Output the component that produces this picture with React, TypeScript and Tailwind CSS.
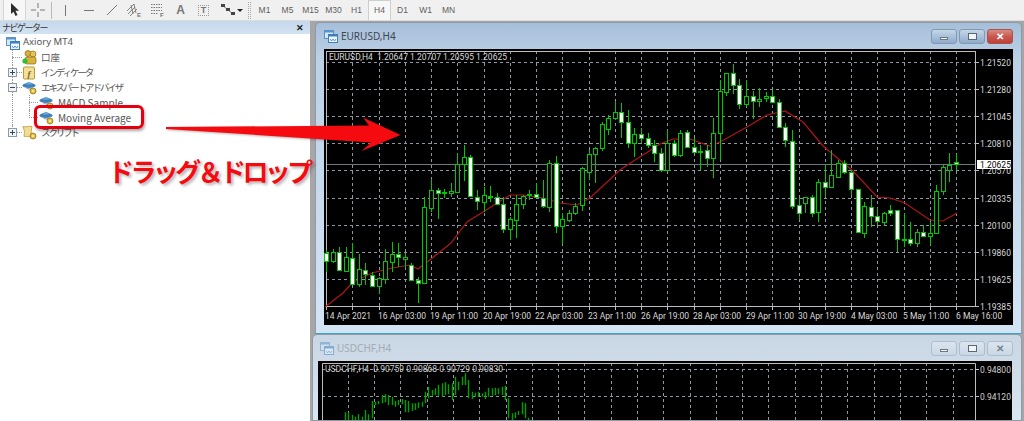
import React from 'react';

// hi, body top, body bottom, lo, solid (white body) - pixel rows of the picture
type Candle = [number, number, number, number, number];

const CANDLES: Candle[] = [
  [250, 253, 261, 272, 1], [249, 252, 261, 263, 0], [247, 252, 270, 271, 1], [247, 257, 271, 271, 0],
  [243, 258, 284, 285, 1], [254, 269, 284, 287, 0], [263, 270, 274, 285, 1], [272, 275, 286, 287, 1],
  [277, 278, 286, 294, 0], [249, 261, 279, 284, 0], [242, 254, 262, 272, 0], [243, 254, 257, 267, 1],
  [253, 257, 259, 268, 0], [263, 265, 280, 281, 1], [277, 280, 283, 303, 1], [197, 207, 283, 284, 0],
  [179, 190, 208, 212, 0], [188, 190, 193, 219, 1], [189, 192, 193, 198, 0], [183, 191, 193, 197, 0],
  [153, 164, 192, 192, 0], [145, 157, 164, 181, 0], [155, 157, 196, 197, 1], [190, 197, 201, 210, 1],
  [187, 195, 202, 212, 0], [186, 196, 197, 202, 0], [193, 197, 204, 205, 1], [197, 204, 229, 233, 1],
  [217, 219, 229, 240, 0], [195, 204, 220, 238, 0], [195, 196, 204, 209, 0], [190, 194, 195, 200, 0],
  [183, 194, 197, 198, 1], [180, 198, 206, 208, 1], [160, 163, 207, 212, 0], [156, 163, 226, 233, 1],
  [213, 219, 226, 244, 0], [210, 213, 220, 222, 0], [203, 206, 213, 215, 0], [167, 168, 205, 211, 0],
  [150, 154, 172, 180, 0], [147, 148, 154, 183, 0], [122, 124, 148, 151, 0], [115, 118, 129, 135, 0],
  [101, 112, 118, 120, 0], [103, 112, 122, 138, 1], [110, 122, 143, 148, 1], [128, 134, 143, 157, 0],
  [128, 134, 138, 143, 1], [133, 138, 145, 148, 1], [140, 145, 153, 162, 1], [148, 153, 170, 172, 1],
  [130, 143, 170, 172, 0], [140, 143, 155, 157, 1], [130, 133, 155, 157, 0], [130, 132, 147, 148, 1],
  [138, 147, 152, 153, 1], [145, 151, 152, 170, 0], [145, 150, 158, 167, 1], [118, 133, 158, 178, 0],
  [80, 91, 133, 160, 0], [73, 73, 92, 96, 0], [64, 73, 85, 94, 1], [79, 85, 104, 109, 1],
  [80, 96, 104, 106, 0], [91, 96, 101, 119, 1], [88, 99, 101, 107, 0], [92, 96, 98, 102, 0],
  [90, 96, 102, 103, 1], [99, 102, 127, 128, 1], [123, 127, 140, 147, 1], [130, 141, 206, 209, 1],
  [198, 205, 213, 220, 1], [197, 197, 203, 213, 0], [195, 197, 213, 217, 1], [179, 182, 212, 222, 0],
  [165, 182, 187, 197, 1], [150, 175, 187, 188, 0], [160, 163, 177, 178, 0], [160, 163, 172, 174, 1],
  [170, 172, 189, 195, 1], [189, 189, 232, 233, 1], [202, 206, 233, 238, 0], [195, 207, 216, 227, 1],
  [208, 216, 221, 225, 1], [212, 213, 222, 225, 0], [205, 210, 213, 216, 1], [210, 210, 239, 252, 1],
  [213, 239, 240, 247, 0], [222, 239, 243, 246, 1], [229, 232, 243, 247, 0], [225, 232, 236, 237, 1],
  [222, 233, 236, 245, 0], [185, 191, 233, 234, 0], [165, 167, 191, 195, 0], [153, 165, 170, 182, 0],
  [154, 162, 164, 170, 1],
];

const MA_LINE =
  '325,307 343,293 352,283 372,273 392,268 410,265 418,269 431,259 451,243 467,222 483,212 510,195 523,195 543,198 560,203 577,205 590,198 620,170 635,160 654,148 660,144 673,139 690,139 710,146 720,142 747,127 767,115 785,111 803,122 823,146 853,171 877,197 890,198 905,203 930,220 943,221 957,213';

const PRICES = [
  ['1.21520', 62], ['1.21280', 89], ['1.21045', 116], ['1.20810', 143], ['1.20570', 170],
  ['1.20335', 198], ['1.20100', 225], ['1.19860', 252], ['1.19625', 279], ['1.19385', 306],
] as const;

const TIMES = [
  ['14 Apr 2021', 325], ['16 Apr 03:00', 378], ['19 Apr 11:00', 430], ['20 Apr 19:00', 483],
  ['22 Apr 03:00', 535], ['23 Apr 11:00', 588], ['26 Apr 19:00', 641], ['28 Apr 03:00', 693],
  ['29 Apr 11:00', 746], ['30 Apr 19:00', 798], ['4 May 03:00', 851], ['5 May 11:00', 903], ['6 May 16:00', 956],
] as const;

// x offset in the zoomed crop, top, bottom of each bar of the second chart
const CHF_BARS = [
  [105, 262, 288], [115, 262, 288], [125, 270, 288], [135, 275, 288], [145, 268, 288], [155, 275, 288], [165, 255, 285],
  [175, 268, 285], [185, 228, 280], [195, 230, 240], [205, 228, 238], [215, 210, 235], [225, 208, 232], [235, 210, 240],
  [245, 215, 240], [255, 228, 245], [265, 225, 240], [275, 222, 238], [285, 225, 262], [295, 228, 262], [305, 235, 258],
  [315, 235, 255], [325, 232, 250], [335, 230, 245], [345, 200, 235], [355, 185, 220], [365, 195, 212], [375, 190, 210],
  [385, 180, 212], [395, 175, 215], [405, 172, 210], [415, 178, 208], [425, 175, 225], [435, 155, 210], [445, 170, 195],
  [455, 155, 180], [465, 145, 180], [475, 165, 220], [485, 200, 222], [495, 203, 215], [505, 200, 215], [515, 205, 215],
  [525, 200, 222], [535, 188, 215], [545, 190, 212], [555, 188, 210], [565, 190, 208], [575, 185, 210], [585, 182, 225],
  [595, 220, 280], [605, 265, 285], [615, 262, 280], [625, 258, 270], [635, 232, 268], [645, 235, 280], [655, 278, 288],
];

const CHART_FONT = 'Roboto, sans-serif';

function range(from: number, to: number, step: number) {
  const out: number[] = [];
  for (let v = from; v <= to; v += step) out.push(Math.round(v) + 0.5);
  return out;
}

const GridLines: React.FC<{ xs: number[]; ys: number[]; left: number; top: number; bottom: number }> = ({ xs, ys, left, top, bottom }) => (
  <g stroke="#8e98a2" strokeWidth="1" strokeDasharray="3 3">
    {xs.map((x) => <line key={x} x1={x} x2={x} y1={top} y2={bottom} />)}
    {ys.map((y) => <line key={y} x1={left} x2={975} y1={y} y2={y} />)}
  </g>
);

const EurChart: React.FC = () => {
  const xs = range(326, 975, 26.25);
  const ys = PRICES.map((p) => p[1] + 0.5);
  return (
    <svg viewBox="324 49 689 276" width={689} height={276} className="block shrink-0 bg-black">
      <GridLines xs={xs} ys={ys} left={326} top={51} bottom={307} />
      <line x1={326} x2={975} y1={164.5} y2={164.5} stroke="#6d7883" />
      <rect x={326.5} y={51.5} width={649} height={255} fill="none" stroke="#bcbcbc" />
      {xs.map((x) => <line key={x} x1={x} x2={x} y1={307} y2={310} stroke="#bcbcbc" />)}
      {ys.map((y) => <line key={y} x1={975} x2={979} y1={y} y2={y} stroke="#bcbcbc" />)}
      <polyline points={MA_LINE} fill="none" stroke="#b0141a" strokeWidth="1.2" />
      {CANDLES.map(([hi, top, bot, lo, solid], i) => {
        const x = Math.round(326 + 6.5625 * i) + 0.5;
        return (
          <g key={i} stroke="#00c800">
            <line x1={x} x2={x} y1={hi} y2={lo} />
            <rect x={x - 2} y={top + 0.5} width={4} height={Math.max(bot - top, 1)} fill={solid ? '#fff' : '#000'} />
          </g>
        );
      })}
      <g fontFamily={CHART_FONT} fontSize="8.5" fill="#d8d8d8">
        <text x={329} y={60}>EURUSD,H4&nbsp;&nbsp;1.20647 1.20707 1.20595 1.20625</text>
        {PRICES.map(([label, y]) => <text key={label} x={980} y={y + 3.5}>{label}</text>)}
        {TIMES.map(([label, x]) => <text key={label} x={x} y={319}>{label}</text>)}
      </g>
      <rect x={977} y={160} width={34} height={9} fill="#fff" />
      <text x={980} y={167.5} fontFamily={CHART_FONT} fontSize="8.5" fill="#000">1.20625</text>
    </svg>
  );
};

const ChfChart: React.FC = () => {
  const xs = range(347.7, 975, 26.3);
  return (
    <svg viewBox="318 361 694 60" width={694} height={60} className="block shrink-0 bg-black">
      <GridLines xs={xs} ys={[369.5, 396.5]} left={322} top={363} bottom={421} />
      <path d="M322.5 421V363.5H975.5V421" fill="none" stroke="#bdbdbd" />
      <line x1={975} x2={979} y1={369.5} y2={369.5} stroke="#c4c4c4" />
      <line x1={975} x2={979} y1={396.5} y2={396.5} stroke="#c4c4c4" />
      {CHF_BARS.map(([z, a, b]) => {
        const x = Math.round(310 + z / 3) + 0.5;
        return <line key={z} x1={x} x2={x} y1={325 + a / 3} y2={325 + b / 3} stroke="#00a000" strokeWidth="1.4" />;
      })}
      <g fontFamily={CHART_FONT} fontSize="8.5" fill="#cfcfcf">
        <text x={325} y={372}>USDCHF,H4&nbsp;&nbsp;0.90759 0.90868 0.90729 0.90830</text>
        <text x={980} y={372.5}>0.94800</text>
        <text x={980} y={399.5}>0.94120</text>
      </g>
    </svg>
  );
};

const WindowIcon: React.FC<{ faded?: boolean; size?: number }> = ({ faded, size = 14 }) => (
  <svg width={size} height={size} viewBox="0 0 14 14" className={faded ? 'opacity-50' : ''}>
    <rect x="0.5" y="1.5" width="9" height="8" fill="#d7e8f7" stroke="#5b93c8" />
    <rect x="0.5" y="1.5" width="9" height="2" fill="#5b93c8" />
    <rect x="4.5" y="5.5" width="9" height="8" fill="#eef6fd" stroke="#3f7fc0" />
    <rect x="4.5" y="5.5" width="9" height="2" fill="#3f7fc0" />
    <path d="M6 10l1.5 2 1.5-2 1.5 2 1.5-2" fill="none" stroke="#3f7fc0" strokeWidth="0.8" />
  </svg>
);

const Controls: React.FC<{ active?: boolean }> = ({ active }) => {
  const btn = active
    ? 'bg-gradient-to-b from-[#c6d6e7] via-[#a9c1da] to-[#8fabcb] border-[#8299b2]'
    : 'bg-gradient-to-b from-[#dbe5ef] to-[#c9d7e5] border-[#aebdcc]';
  return (
    <div className="flex items-center gap-[2px]">
      <div className={`flex h-[15px] w-[26px] items-center justify-center rounded-[3px] border ${btn}`}>
        <div className="mt-[4px] h-[3px] w-[8px] border border-[#6b7784] bg-[#f2f5f8]" />
      </div>
      <div className={`flex h-[15px] w-[26px] items-center justify-center rounded-[3px] border ${btn}`}>
        <div className="h-[7px] w-[9px] border border-[#5b6773] bg-[#f2f5f8]" />
      </div>
      <div
        className={`flex h-[15px] w-[26px] items-center justify-center rounded-[3px] border text-[10px] leading-none font-bold ${
          active
            ? 'border-[#a5534b] bg-gradient-to-b from-[#d88a84] via-[#c9584f] to-[#c04038] text-white'
            : `${btn} text-[#76828e]`
        }`}
      >
        ✕
      </div>
    </div>
  );
};

const ToolBtn: React.FC<{ children: React.ReactNode; className?: string }> = ({ children, className }) => (
  <div className={`flex h-[20px] w-[23px] shrink-0 items-center justify-center ${className ?? ''}`}>{children}</div>
);

const Sep: React.FC = () => <div className="mx-[2px] h-[17px] w-px shrink-0 bg-[#b9b9b9]" />;

const G = '#777';

const Toolbar: React.FC = () => (
  <div className="flex h-[21px] shrink-0 items-center border-b border-[#dcdcdc] bg-[#f0f0f0] pl-[3px] font-['Liberation_Sans',sans-serif]">
    <ToolBtn className="border-x border-[#d4d4d4] bg-[#f7f7f7]">
      <svg width="10" height="14" viewBox="0 0 10 14"><path d="M1 0v11l2.5-2.3L5.5 13l2-1-2-4.2H9z" fill="#2c2c2c" /></svg>
    </ToolBtn>
    <ToolBtn>
      <svg width="14" height="14" viewBox="0 0 14 14"><path d="M7 0v5M7 9v5M0 7h5M9 7h5" stroke={G} /></svg>
    </ToolBtn>
    <Sep />
    <ToolBtn><div className="h-[11px] w-px bg-[#777]" /></ToolBtn>
    <ToolBtn><div className="h-px w-[10px] bg-[#777]" /></ToolBtn>
    <ToolBtn>
      <svg width="12" height="12" viewBox="0 0 12 12"><path d="M1 11L11 1" stroke={G} /></svg>
    </ToolBtn>
    <ToolBtn>
      <svg width="15" height="14" viewBox="0 0 15 14">
        <path d="M0 8L7 1M1 11l7-7M3 13l7-7M4 2l2 9M7 1l2 9" stroke={G} fill="none" strokeWidth="0.9" />
        <text x="10" y="13.5" fontSize="6" fontWeight="700" fill={G} fontFamily="Liberation Sans, sans-serif">E</text>
      </svg>
    </ToolBtn>
    <ToolBtn>
      <svg width="15" height="14" viewBox="0 0 15 14">
        <path d="M1 1.5h11M1 4.5h11M1 7.5h11M1 10.5h7" stroke={G} strokeDasharray="1.5 1" fill="none" />
        <text x="10" y="13.5" fontSize="6" fontWeight="700" fill={G} fontFamily="Liberation Sans, sans-serif">F</text>
      </svg>
    </ToolBtn>
    <ToolBtn><span className="text-[12px] font-bold text-[#777]">A</span></ToolBtn>
    <ToolBtn>
      <div className="flex h-[11px] w-[11px] items-center justify-center border border-dotted border-[#999] text-[9px] leading-none font-bold text-[#777]">T</div>
    </ToolBtn>
    <div className="ml-[2px] flex h-[20px] w-[29px] shrink-0 items-center justify-center gap-[2px]">
      <svg width="14" height="12" viewBox="0 0 14 12">
        <path d="M1 1l11 9" stroke={G} />
        <path d="M0 0h4v3H0zM5 4h4v3H5zM10 8h4v3h-4z" fill="#444" />
      </svg>
      <svg width="6" height="3" viewBox="0 0 6 3"><path d="M0 0h6L3 3z" fill="#222" /></svg>
    </div>
    <div className="mr-[2px] ml-[2px] h-[17px] w-[3px] shrink-0 border-x border-dotted border-[#a8a8a8]" />
    {['M1', 'M5', 'M15', 'M30', 'H1', 'H4', 'D1', 'W1', 'MN'].map((tf) => (
      <div
        key={tf}
        className={`flex h-[20px] w-[23px] shrink-0 items-center justify-center text-[8.5px] text-[#5e5e5e] ${
          tf === 'H4' ? 'border-x border-t border-[#cfcfcf] bg-[#f7f7f7]' : ''
        }`}
      >
        {tf}
      </div>
    ))}
  </div>
);

const Gold = '#d9b13b';

const AccountIcon = () => (
  <svg width="16" height="15" viewBox="0 0 16 15">
    <circle cx="6" cy="3.5" r="3" fill={Gold} stroke="#8a6a14" strokeWidth="0.7" />
    <circle cx="11" cy="4" r="3" fill="#e5c356" stroke="#8a6a14" strokeWidth="0.7" />
    <rect x="3" y="7" width="11" height="7" rx="2" fill={Gold} stroke="#8a6a14" strokeWidth="0.7" />
    <circle cx="3" cy="11" r="2.6" fill="#2bc03a" />
  </svg>
);

const IndicatorIcon = () => (
  <svg width="14" height="14" viewBox="0 0 14 14">
    <rect x="1.5" y="1" width="11" height="12" rx="1" fill="#f3df97" stroke="#b89a3c" />
    <text x="7" y="10.5" textAnchor="middle" fontSize="9" fontStyle="italic" fontWeight="700" fill="#7c6420" fontFamily="Liberation Serif, serif">f</text>
  </svg>
);

const ExpertIcon = () => (
  <svg width="15" height="15" viewBox="0 0 15 15">
    <ellipse cx="7" cy="5.5" rx="6.5" ry="2.4" fill="#3f82bd" />
    <path d="M3.5 5C4 1.5 10 1.5 10.5 5z" fill="#6aa7d8" stroke="#2f6ea5" strokeWidth="0.5" />
    <path d="M4 7.5c2 1.8 4 1.8 5 1" stroke="#7d8a96" fill="none" />
    <circle cx="11" cy="11" r="3" fill="#e3bd3e" stroke="#8a6a14" strokeWidth="0.7" />
    <circle cx="11" cy="11" r="1" fill="#fff3c0" />
  </svg>
);

const ScriptIcon = () => (
  <svg width="15" height="15" viewBox="0 0 15 15">
    <path d="M1 1.5c3 1 6-.8 9 0l-.8 5 .8 5c-3 .8-6-.6-8 0l.5-5z" fill="#f1dc92" stroke="#bb9c40" strokeWidth="0.8" />
    <circle cx="11" cy="11" r="3" fill="#e3bd3e" stroke="#8a6a14" strokeWidth="0.7" />
    <circle cx="11" cy="11" r="1" fill="#fff3c0" />
  </svg>
);

const Expander: React.FC<{ open?: boolean }> = ({ open }) => (
  <svg width="9" height="9" viewBox="0 0 9 9" className="absolute top-[3px] left-[8px]">
    <rect x="0.5" y="0.5" width="8" height="8" fill="#f4f4f4" stroke="#8c9aa6" />
    <path d={open ? 'M2 4.5h5' : 'M2 4.5h5M4.5 2v5'} stroke="#2d4a66" />
  </svg>
);

type RowProps = {
  label: string;
  icon: React.ReactNode;
  expander?: 'open' | 'closed';
  last?: boolean;
  sub?: boolean;
  subLast?: boolean;
  labelClass?: string;
};

const KANA = 'text-[9.5px] tracking-[-2.1px]';

const TreeRow: React.FC<RowProps> = ({ label, icon, expander, last, sub, subLast, labelClass = 'text-[10px]' }) => (
  <div className="relative flex h-[15px] items-center">
    <div className={`absolute top-0 left-[12px] border-l border-dotted border-[#9a9a9a] ${last ? 'h-[8px]' : 'h-[15px]'}`} />
    {!sub && <div className="absolute top-[7px] left-[12px] w-[10px] border-t border-dotted border-[#9a9a9a]" />}
    {sub && (
      <>
        <div className={`absolute top-0 left-[29px] border-l border-dotted border-[#9a9a9a] ${subLast ? 'h-[8px]' : 'h-[15px]'}`} />
        <div className="absolute top-[7px] left-[29px] w-[9px] border-t border-dotted border-[#9a9a9a]" />
      </>
    )}
    {expander && <Expander open={expander === 'open'} />}
    <div className={`relative flex shrink-0 items-center ${sub ? 'ml-[39px] w-[19px]' : 'ml-[22px] w-[19px]'}`}>{icon}</div>
    <span className={`whitespace-nowrap text-[#555] ${labelClass}`}>{label}</span>
  </div>
);

const Navigator: React.FC = () => (
  <div className="flex w-[310px] shrink-0 flex-col bg-white font-['Noto_Sans_CJK_JP',sans-serif]">
    <div className="flex h-[13px] shrink-0 items-center justify-between bg-gradient-to-b from-[#c4d8ec] to-[#d3e2f1] pr-[5px] pl-[2px]">
      <span className="text-[9px] leading-none tracking-[-1.5px] text-[#333]">ナビゲーター</span>
      <span className="mr-[1px] text-[9px] leading-none font-bold text-[#222]">✕</span>
    </div>
    <div className="mt-[1px] flex flex-col">
      <div className="flex h-[15px] items-center pl-[6px]">
        <WindowIcon />
        <span className="ml-[3px] font-['Noto_Sans',sans-serif] text-[9.5px] text-[#555]">Axiory MT4</span>
      </div>
      <TreeRow label="口座" icon={<AccountIcon />} labelClass="text-[9.5px]" />
      <TreeRow label="インディケータ" icon={<IndicatorIcon />} expander="closed" labelClass={KANA} />
      <TreeRow label="エキスパートアドバイザ" icon={<ExpertIcon />} expander="open" labelClass={KANA} />
      <TreeRow label="MACD Sample" icon={<ExpertIcon />} sub />
      <TreeRow label="Moving Average" icon={<ExpertIcon />} sub subLast />
      <TreeRow label="スクリプト" icon={<ScriptIcon />} expander="closed" last labelClass={KANA} />
    </div>
  </div>
);

const ChartWindow: React.FC<{ title: string; active?: boolean; className: string; titleClass: string; children: React.ReactNode }> = ({
  title,
  active,
  className,
  titleClass,
  children,
}) => (
  <div
    className={`flex flex-col overflow-hidden rounded-t-[5px] border border-[#8f9aa6] ${
      active
        ? 'bg-gradient-to-b from-[#a6bfd9] via-[#bcd1e6] via-[12%] to-[#d3e5f5]'
        : 'bg-gradient-to-b from-[#c9d6e3] to-[#d9e5f1]'
    } ${className}`}
  >
    <div className="flex h-[26px] shrink-0 items-center justify-between pr-[8px]">
      <div className={`flex items-center gap-[3px] ${titleClass}`}>
        <WindowIcon faded={!active} />
        <span className={`font-['Noto_Sans',sans-serif] text-[10px] ${active ? 'text-[#3f4650]' : 'text-[#a4acb5]'}`}>{title}</span>
      </div>
      <Controls active={active} />
    </div>
    {children}
  </div>
);

export default function App() {
  return (
    <div className="relative flex h-[421px] w-[1024px] flex-col overflow-hidden bg-[#f0f0f0]">
      <Toolbar />
      <div className="flex min-h-0 flex-1">
        <Navigator />
        <div className="flex min-w-0 flex-1 flex-col bg-[#a6a6a6] pt-[1px] pl-[2px]">
          <ChartWindow title="EURUSD,H4" active titleClass="pl-0" className="mr-[2px] ml-[3px] h-[312px] shrink-0 border-b-[#39a6c9] pl-[8px]">
            <EurChart />
          </ChartWindow>
          <ChartWindow title="USDCHF,H4" titleClass="pl-[2px]" className="mr-[2px] min-h-0 flex-1 pl-[5px]">
            <ChfChart />
          </ChartWindow>
        </div>
      </div>

      {/* annotations on top of the screenshot */}
      <div className="absolute top-[105px] left-[34px] h-[24px] w-[110px] rounded-[6px] border-[3px] border-[#e6000f] shadow-[1px_2px_3px_rgba(0,0,0,0.35)]" />
      <svg width="240" height="40" viewBox="165 115 240 40" className="absolute top-[115px] left-[165px] drop-shadow-[1px_1px_1px_rgba(0,0,0,0.3)]">
        <polygon points="166,127 369,125.5 363,117.5 400.5,135 361.7,151 371,142.5 166,129" fill="#f50a0f" />
      </svg>
      <div className="absolute top-[153px] left-[108px] font-['Noto_Sans_CJK_JP',sans-serif] text-[26px] leading-[36px] font-bold tracking-[-3.6px] whitespace-nowrap text-[#f50a0f] [text-shadow:2px_2px_3px_rgba(0,0,0,0.3)]">
        ドラッグ＆ドロップ
      </div>
    </div>
  );
}
